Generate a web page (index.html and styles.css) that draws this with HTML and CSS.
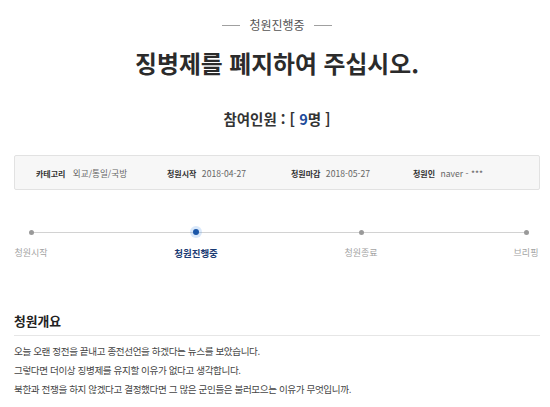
FILE: index.html
```html
<!DOCTYPE html>
<html lang="ko">
<head>
    <meta charset="UTF-8">
    <meta name="viewport" content="width=device-width, initial-scale=1.0">
    <title>청원 - 징병제를 폐지하여 주십시오.</title>
    <link rel="stylesheet" href="styles.css">
</head>
<body>
    <div class="petition">
        <div class="petition-status">
            <span class="status-line"></span>
            <span>청원진행중</span>
            <span class="status-line"></span>
        </div>
        <h1 class="petition-title">징병제를 폐지하여 주십시오.</h1>
        <p class="petition-count">참여인원 : [ <span class="count-num">9</span>명 ]</p>

        <ul class="petition-info">
            <li class="info-item info-category"><strong>카테고리</strong> 외교/통일/국방</li>
            <li class="info-item info-start"><strong>청원시작</strong> 2018-04-27</li>
            <li class="info-item info-end"><strong>청원마감</strong> 2018-05-27</li>
            <li class="info-item"><strong>청원인</strong> naver - ***</li>
        </ul>

        <!-- 진행 단계 -->
        <div class="steps">
            <div class="step">
                <span class="step-dot"></span>
                <span class="step-label">청원시작</span>
            </div>
            <div class="step active">
                <span class="step-dot"></span>
                <span class="step-label">청원진행중</span>
            </div>
            <div class="step">
                <span class="step-dot"></span>
                <span class="step-label">청원종료</span>
            </div>
            <div class="step">
                <span class="step-dot"></span>
                <span class="step-label">브리핑</span>
            </div>
        </div>

        <h2 class="section-title">청원개요</h2>
        <div class="petition-body">
            <p>오늘 오랜 정전을 끝내고 종전선언을 하겠다는 뉴스를 보았습니다.</p>
            <p>그렇다면 더이상 징병제를 유지할 이유가 없다고 생각합니다.</p>
            <p>북한과 전쟁을 하지 않겠다고 결정했다면 그 많은 군인들은 불러모으는 이유가 무엇입니까.</p>
        </div>
    </div>
</body>
</html>
```

FILE: styles.css
```css
body {
    font-family: "Noto Sans CJK KR", "Noto Sans", sans-serif;
    background-color: #fff;
    color: #333;
    margin: 0;
    padding: 0;
}

.petition {
    padding: 17px 10px 0 14px;
}

.petition-status {
    display: flex;
    justify-content: center;
    align-items: center;
    gap: 9px;
    font-size: 12px;
    line-height: 16px;
    color: #555;
}

.status-line {
    width: 18px;
    height: 1px;
    background-color: #a0a0a0;
}

.petition-title {
    margin: 15px 0 0;
    font-size: 23.8px;
    line-height: 30px;
    text-align: center;
    color: #2b2b2b;
}

.petition-count {
    margin: 31px 0 0;
    font-size: 14.5px;
    line-height: 20px;
    font-weight: bold;
    text-align: center;
    color: #333;
}

.count-num {
    color: #1d4c9c;
}

.petition-info {
    display: flex;
    align-items: center;
    list-style: none;
    margin: 26px 0 0;
    padding: 0 0 0 21px;
    height: 33px;
    width: 503px;
    background-color: #f7f7f7;
    border: 1px solid #e2e2e2;
    border-radius: 2px;
    font-size: 8.6px;
    color: #666;
}

.info-item strong {
    font-size: 8px;
    color: #333;
    margin-right: 3px;
}

.info-category {
    width: 131px;
}

.info-category strong {
    margin-right: 5px;
}

.info-start {
    width: 124px;
}

.info-end {
    width: 122px;
}

.steps {
    display: flex;
    justify-content: space-between;
    margin: 36px 8px 0 11px;
    background: linear-gradient(#d2d2d2, #d2d2d2) no-repeat;
    background-size: calc(100% - 12px) 1px;
    background-position: 6px 6px;
}

.step {
    width: 12px;
    display: flex;
    flex-direction: column;
    align-items: center;
}

.step-dot {
    width: 5px;
    height: 5px;
    margin: 3.5px 0;
    border-radius: 50%;
    background-color: #9a9a9a;
}

.step.active .step-dot {
    width: 6px;
    height: 6px;
    margin: 3px 0;
    background-color: #1a56a8;
    box-shadow: 0 0 0 3px rgba(80, 150, 230, 0.22);
}

.step-label {
    margin-top: 9px;
    font-size: 9px;
    line-height: 12px;
    white-space: nowrap;
    color: #a3a3a3;
}

.step.active .step-label {
    font-weight: bold;
    font-size: 9.5px;
    color: #1c3c74;
}

.section-title {
    margin: 54px 0 0;
    padding-bottom: 6px;
    border-bottom: 1px solid #e6e6e6;
    font-size: 12.8px;
    line-height: 16px;
    color: #222;
}

.petition-body {
    margin-top: 6px;
    font-size: 9.6px;
    letter-spacing: -0.4px;
    line-height: 19px;
    color: #444;
}

.petition-body p {
    margin: 0;
}
```
